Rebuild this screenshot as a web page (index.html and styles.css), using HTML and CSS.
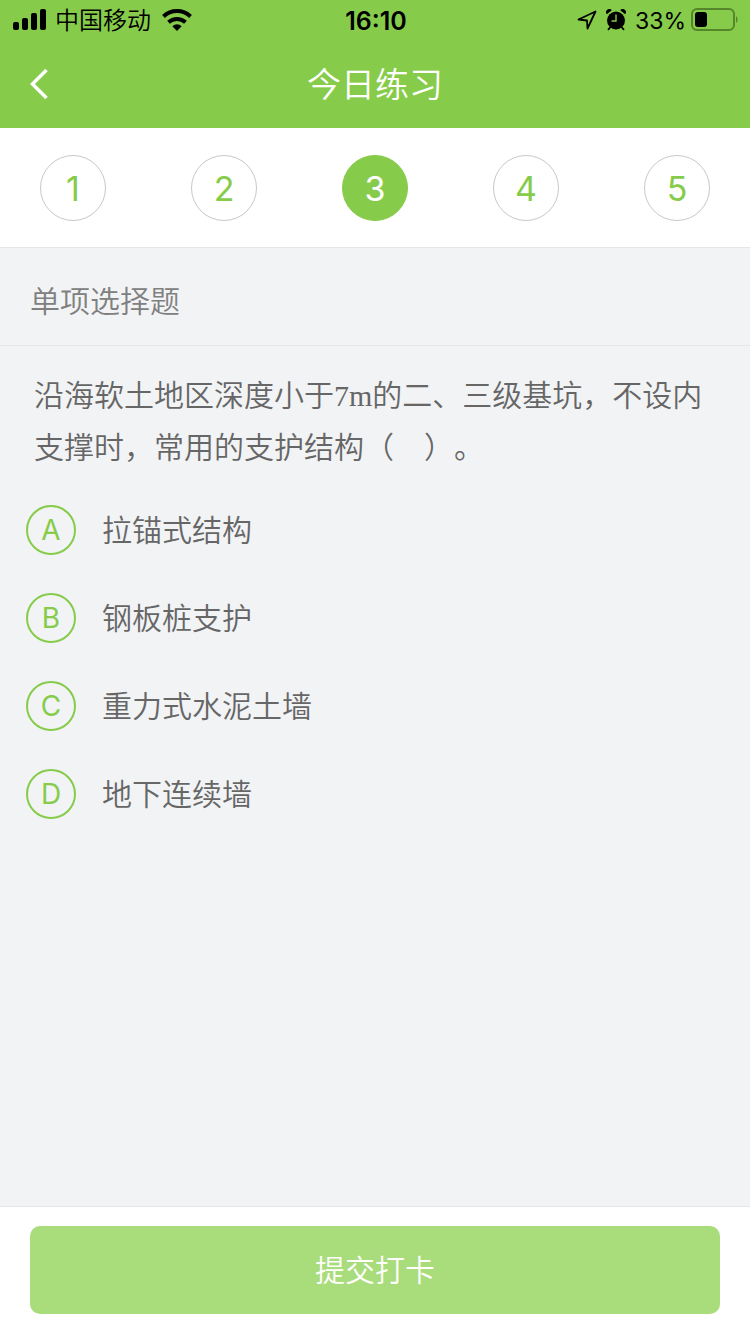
FILE: index.html
```html
<!DOCTYPE html>
<html lang="zh-CN">
<head>
    <meta charset="UTF-8">
    <meta name="viewport" content="width=device-width, initial-scale=1.0">
    <title>今日练习</title>
    <link rel="stylesheet" href="styles.css">
</head>
<body>
    <header class="top">
        <div class="status-bar">
            <div class="status-left">
                <svg class="signal" width="34" height="22" viewBox="0 0 34 22">
                    <rect x="0" y="13" width="6" height="8" rx="2"/>
                    <rect x="9" y="9" width="6" height="12" rx="2"/>
                    <rect x="18" y="4" width="6" height="17" rx="2"/>
                    <rect x="27" y="0" width="6" height="21" rx="2"/>
                </svg>
                <span class="carrier">中国移动</span>
                <svg class="wifi" width="30" height="22" viewBox="0 0 30 22">
                    <path d="M1.500 7.500a19.500 19.500 0 0 1 27 0" fill="none" stroke="#000" stroke-width="4"/>
                    <path d="M6.500 13.300a12.400 12.400 0 0 1 17 0" fill="none" stroke="#000" stroke-width="4"/>
                    <path d="M15 22l-4.700-4.800a6.800 6.800 0 0 1 9.400 0z"/>
                </svg>
            </div>
            <span class="time">16:10</span>
            <div class="status-right">
                <svg width="20" height="20" viewBox="0 0 20 20">
                    <path d="M18.500 1.500L1.500 9.500l8.500 1 .5 8z" fill="none" stroke="#000" stroke-width="1.800" stroke-linejoin="round"/>
                </svg>
                <svg class="alarm" width="20" height="22" viewBox="0 0 20 22">
                    <circle cx="10" cy="11.500" r="9"/>
                    <path d="M.8 5.200a3 3 0 0 1 5-4zM19.200 5.200a3 3 0 0 0-5-4z"/>
                    <path d="M4.500 18l-2.500 2.800M15.500 18l2.500 2.800" stroke="#000" stroke-width="1.800"/>
                    <path d="M10 5.500v6.500H5.500" fill="none" stroke="#86cc4a" stroke-width="1.400"/>
                </svg>
                <span class="percent">33%</span>
                <svg width="48" height="24" viewBox="0 0 48 24">
                    <rect x="1" y="1" width="42" height="21" rx="5" fill="none" stroke="#55862c" stroke-width="2"/>
                    <rect x="4" y="4" width="12" height="15" rx="3"/>
                    <path d="M45 8a4.500 4.500 0 0 1 0 7z" fill="#55862c"/>
                </svg>
            </div>
        </div>
        <nav class="nav-bar">
            <button type="button" class="back" aria-label="返回">
                <svg width="20" height="32" viewBox="0 0 20 32">
                    <path d="M17.500 2L3.500 16l14 14" fill="none" stroke="#fff" stroke-width="3.500"/>
                </svg>
            </button>
            <h1 class="title">今日练习</h1>
        </nav>
    </header>

    <div class="steps">
        <button type="button" class="step">1</button>
        <button type="button" class="step">2</button>
        <button type="button" class="step active">3</button>
        <button type="button" class="step">4</button>
        <button type="button" class="step">5</button>
    </div>

    <form class="quiz" id="quizForm">
        <h2 class="type">单项选择题</h2>
        <div class="content">
            <p class="question" id="question">沿海软土地区深度小于7m的二、三级基坑，不设内支撑时，常用的支护结构（&#12288;）。</p>
            <div class="options" role="radiogroup" aria-labelledby="question">
                <label class="option">
                    <input type="radio" name="answer" value="A">
                    <span class="letter">A</span>
                    <span>拉锚式结构</span>
                </label>
                <label class="option">
                    <input type="radio" name="answer" value="B">
                    <span class="letter">B</span>
                    <span>钢板桩支护</span>
                </label>
                <label class="option">
                    <input type="radio" name="answer" value="C">
                    <span class="letter">C</span>
                    <span>重力式水泥土墙</span>
                </label>
                <label class="option">
                    <input type="radio" name="answer" value="D">
                    <span class="letter">D</span>
                    <span>地下连续墙</span>
                </label>
            </div>
        </div>
        <div class="footer">
            <button type="submit" class="submit">提交打卡</button>
        </div>
    </form>
</body>
</html>
```

FILE: styles.css
```css
* {
    box-sizing: border-box;
}
body {
    display: flex;
    flex-direction: column;
    min-height: 100vh;
    margin: 0;
    background-color: #f2f3f5;
    color: #666;
    font-family: Inter, "Noto Sans CJK SC", sans-serif;
    font-size: 30px;
    font-weight: 350;
    text-spacing-trim: space-all;
}
h1, h2, p {
    margin: 0;
    font-weight: 350;
}
button {
    padding: 0;
    border: none;
    font: inherit;
    cursor: pointer;
}
svg {
    display: block;
}

/* header */
.top {
    background-color: #86cc4a;
}
.status-bar {
    display: grid;
    grid-template-columns: 1fr auto 1fr;
    align-items: center;
    height: 40px;
    padding: 0 11px 0 13px;
    color: #000;
    font-size: 24px;
    line-height: 40px;
}
.status-left, .status-right {
    display: flex;
    align-items: center;
}
.status-left {
    gap: 8px;
}
.carrier, .time, .percent {
    padding-top: 2px;
    line-height: 38px;
}
.wifi {
    margin-left: 3px;
}
.time {
    font-size: 25px;
    font-weight: 600;
}
.status-right {
    justify-content: flex-end;
    gap: 5px;
}
.alarm {
    margin: 0 4px;
}
.percent {
    font-size: 23px;
    font-weight: 400;
}
.nav-bar {
    display: grid;
    grid-template-columns: 60px 1fr 60px;
    align-items: center;
    height: 88px;
    color: #fff;
}
.back {
    display: flex;
    align-items: center;
    height: 88px;
    padding-left: 29px;
    background: none;
}
.title {
    padding-bottom: 4px;
    font-size: 34px;
    text-align: center;
}

/* question numbers */
.steps {
    display: flex;
    justify-content: space-between;
    padding: 27px 40px 26px;
    border-bottom: 1px solid #e5e5e5;
    background-color: #fff;
}
.step {
    width: 66px;
    height: 66px;
    border: 1px solid #c8c8c8;
    border-radius: 50%;
    background-color: #fff;
    color: #86cc4a;
    font-size: 34px;
    font-weight: 400;
}
.step.active {
    border-color: #86cc4a;
    background-color: #86cc4a;
    color: #fff;
}

/* question */
.quiz {
    display: flex;
    flex: 1;
    flex-direction: column;
}
.type {
    padding: 31px 30px 22px;
    border-bottom: 1px solid #e5e6e8;
    color: #808080;
    font-size: 30px;
    line-height: 44px;
}
.content {
    flex: 1;
    padding: 24px 26px;
}
.question {
    padding: 0 8px;
    font-family: "Liberation Serif", "Noto Sans CJK SC", serif;
    line-height: 52px;
}
.options {
    display: flex;
    flex-direction: column;
    gap: 38px;
    padding-top: 31px;
}
.option {
    display: grid;
    grid-template-columns: 50px 1fr;
    column-gap: 26px;
    align-items: center;
    line-height: 50px;
    cursor: pointer;
}
.option input, .letter {
    grid-row: 1;
    grid-column: 1;
}
.option input {
    width: 50px;
    height: 50px;
    margin: 0;
    border: 2px solid #86cc4a;
    border-radius: 50%;
    appearance: none;
}
.option input:checked {
    background-color: #86cc4a;
}
.option input:checked + .letter {
    color: #fff;
}
.letter {
    z-index: 1;
    color: #86cc4a;
    font-size: 28px;
    font-weight: 400;
    text-align: center;
}

/* submit */
.footer {
    padding: 19px 30px 20px;
    border-top: 1px solid #e5e6e8;
    background-color: #fff;
}
.submit {
    width: 100%;
    height: 88px;
    padding-bottom: 4px;
    border-radius: 10px;
    background-color: #a9dc7a;
    color: #fff;
}
```
